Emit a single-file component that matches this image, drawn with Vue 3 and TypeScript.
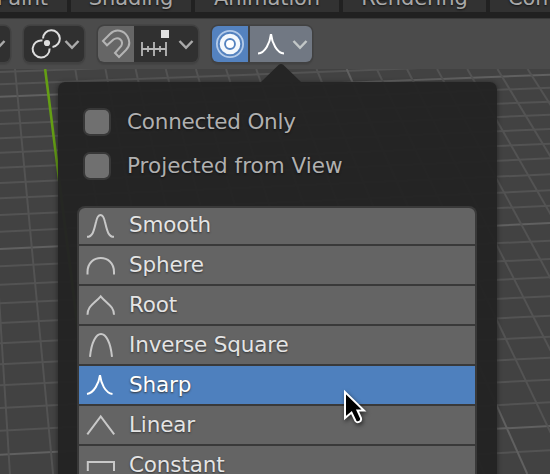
<script setup lang="ts">
interface Falloff {
  name: string
  path: string
}

const falloffs: Falloff[] = [
  { name: 'Smooth', path: 'M1 26.8 C7 26.8 8 20 10 12 C12 2.5 17 2.5 19 12 C21 20 22 26.8 28 26.8' },
  { name: 'Sphere', path: 'M1.5 24.5 V22 C1.5 3.3 28 3.3 28 22 V24.5' },
  { name: 'Root', path: 'M1.5 24.8 C1.5 16 8 14 14.7 6.3 C21 14 28 16 28 24.8' },
  { name: 'Inverse Square', path: 'M4 26.8 C7 -3.5 23 -3.5 26 26.8' },
  { name: 'Sharp', path: 'M1 24 C8 23 13 13 14 5 C15 13 19 23 26.5 24' },
  { name: 'Linear', path: 'M1.3 24.4 L14.7 6.5 L28.2 24.4' },
  { name: 'Constant', path: 'M1.8 21 V12 H28 V21' },
]
const active = 'Sharp'
const options = [
  { name: 'Connected Only', key: 'connected' },
  { name: 'Projected from View', key: 'projected' },
]
const tabs = [
  { name: 'Paint', key: 'paint' },
  { name: 'Shading', key: 'shading' },
  { name: 'Animation', key: 'animation' },
  { name: 'Rendering', key: 'rendering' },
  { name: 'Compositing', key: 'compositing' },
]

// Floor grid in perspective: heights at both sides of the viewport, in thirds of a pixel.
const leftEdge = [36, 73, 110, 152, 192, 235, 278, 323, 369, 415, 465, 515, 567, 619, 674, 730, 789, 850, 913, 976, 1044, 1112, 1184, 1258]
const rightEdge = [-25, 9, 44, 83, 125, 164, 207, 251, 295, 343, 391, 437, 489, 542, 597, 652, 709, 767, 830, 893, 959, 1027, 1098, 1171]
const rows = leftEdge.map((l, i) => ({ y1: l / 3 - 9, y2: rightEdge[i] / 3 - 9, major: i % 10 === 2 }))
const columns = Array.from({ length: 20 }, (_, i) => {
  const k = i - 1
  const x = 15 + 30.15 * k
  return { x1: x, x2: x + 405 * (0.094 + 0.032 * k), major: k === 11, axis: k === 1 }
})
</script>

<template>
  <div class="editor">
    <nav class="tabs">
      <div v-for="t in tabs" :key="t.key" class="tab" :class="t.key"><span>{{ t.name }}</span></div>
    </nav>
    <header class="header">
      <div class="button first">
        <svg class="chev" viewBox="0 0 16 12"><path d="M1.5 2 L8 8.8 L14.5 2" /></svg>
      </div>
      <div class="button pivot">
        <svg width="30" height="30" viewBox="0 0 30 30" class="pivot-icon">
          <path d="M12 9.5 A8.4 8.4 0 1 1 21.5 18" />
          <path d="M11.5 11.6 A8.5 8.5 0 1 0 18.6 19.5" />
          <circle cx="16" cy="14" r="3.1" />
        </svg>
        <svg class="chev" viewBox="0 0 16 12"><path d="M1.5 2 L8 8.8 L14.5 2" /></svg>
      </div>
      <div class="button snap">
        <div class="toggle">
          <svg width="30" height="30" viewBox="0 0 30 30" class="magnet">
            <path d="M2 12 L9 5 C15 -1 23 1.5 26.5 7.5 C29.5 13 28 18 25 21 L18 28 L14 24 L20.2 17 C23 11.5 17.5 7 12.5 10.5 L6 16.3 Z" />
          </svg>
        </div>
        <div class="increment">
          <svg width="30" height="30" viewBox="0 0 30 30">
            <path d="M1 13 V27 M13 13 V27 M25 13 V27 M1 20 H25 M7 17 V23 M19 17 V23" />
            <rect x="20" y="1" width="8" height="8" />
          </svg>
          <svg class="chev" viewBox="0 0 16 12"><path d="M1.5 2 L8 8.8 L14.5 2" /></svg>
        </div>
      </div>
      <div class="button proportional">
        <div class="toggle">
          <svg width="30" height="30" viewBox="0 0 30 30">
            <circle class="halo" cx="15" cy="15" r="13.1" />
            <circle class="ring" cx="15" cy="15" r="8.1" />
            <circle class="dot" cx="15" cy="15" r="4" />
          </svg>
        </div>
        <div class="falloff">
          <svg width="30" height="30" viewBox="0 0 30 30"><path d="M2 24.5 C9 24 14 14 15 5 C16 14 21 24 28 24.5" /></svg>
          <svg class="chev" viewBox="0 0 16 12"><path d="M1.5 2 L8 8.8 L14.5 2" /></svg>
        </div>
      </div>
    </header>
    <main class="viewport">
      <svg class="grid" width="550" height="405" viewBox="0 0 550 405">
        <line v-for="(r, i) in rows" :key="'r' + i" x1="0" :y1="r.y1" x2="550" :y2="r.y2" :class="{ major: r.major }" />
        <line v-for="(c, i) in columns" :key="'c' + i" :x1="c.x1" y1="0" :x2="c.x2" y2="405" :class="{ major: c.major, axis: c.axis }" />
      </svg>
    </main>
    <section class="popover">
      <svg class="arrow" width="40" height="18" viewBox="0 0 40 18"><path d="M0 18 L17.5 1 Q20 -1 22.5 1 L40 18 Z" /></svg>
      <div class="options">
        <div v-for="o in options" :key="o.key" class="option" :class="o.key"><i class="box"></i><span>{{ o.name }}</span></div>
      </div>
      <ul class="list">
        <li v-for="f in falloffs" :key="f.name" :class="{ active: f.name === active }">
          <svg width="30" height="30" viewBox="0 0 30 30"><path :d="f.path" /></svg>
          <span>{{ f.name }}</span>
        </li>
      </ul>
    </section>
    <svg class="cursor" width="24" height="38" viewBox="0 0 24 38">
      <path d="M2 3 V29 L8.5 23.5 L12.5 32 Q14.5 34.5 17.5 32 Q18.5 30.5 18 29 L14.5 21.5 H21 Z" />
    </svg>
  </div>
</template>

<style>
body { background: #424242; overflow: hidden; }
</style>
<style scoped>
.editor { position: relative; width: 550px; height: 474px; overflow: hidden; display: flex; flex-direction: column; font-family: "DejaVu Sans", sans-serif; font-size: 21.5px; color: #b0b0b0; }
svg { display: block; flex: none; fill: none; stroke-linecap: butt; }
.tabs { height: 12px; flex: none; display: flex; gap: 4px; background: #212121; border-bottom: 6px solid #212121; overflow: hidden; }
.tab { height: 12px; background: #323232; flex: none; display: flex; justify-content: center; align-items: flex-end; font-size: 21px; letter-spacing: -.1px; color: #a8a8a8; text-shadow: 0 1px 2px #111; }
.tab span { line-height: 26px; margin-bottom: 1px; white-space: nowrap; }
.paint { width: 67px; justify-content: flex-end; padding-right: 19px; box-sizing: border-box; }
.shading { width: 120px; }
.animation { width: 144px; }
.rendering { width: 143px; }
.compositing { width: 80px; justify-content: flex-start; padding-left: 18px; }
.header { height: 51px; flex: none; box-sizing: border-box; border-top: 1px solid #3a3a3a; background: #4b4b4b; display: flex; gap: 14px; padding-top: 7px; }
.button { height: 36px; border-radius: 6px; overflow: hidden; background: #303030; box-shadow: 0 0 0 1.5px #414141, 0 2px 1px 1px #454545; display: flex; align-items: center; flex: none; box-sizing: border-box; }
.chev { width: 16px; height: 12px; stroke: #aaa; stroke-width: 2.5; margin-top: 2px; }
.first { width: 10px; justify-content: flex-end; padding-right: 4px; border-radius: 0 6px 6px 0; }
.pivot { width: 60px; padding-left: 7px; gap: 3px; }
.pivot-icon { stroke: #ddd; stroke-width: 2; }
.pivot-icon circle { fill: #ddd; stroke: none; }
.snap { width: 100px; }
.toggle { width: 36px; height: 36px; flex: none; display: flex; align-items: center; justify-content: center; background: #666; }
.magnet { stroke: #b4b4b4; stroke-width: 2; }
.increment { display: flex; align-items: center; padding-left: 7px; gap: 7px; }
.increment svg:first-child { stroke: #b8b8b8; stroke-width: 1.8; }
.increment rect { fill: #e0e0e0; stroke: none; }
.proportional { width: 100px; gap: 2px; background: #414141; }
.proportional .toggle { background: #5482bf; }
.halo { stroke: #b3cae8; stroke-width: 1.8; }
.ring { stroke: #f4f8fc; stroke-width: 4.4; }
.dot { fill: #fff; }
.falloff { flex: 1; height: 36px; background: #717883; display: flex; align-items: center; padding-left: 6px; gap: 6px; }
.falloff svg:first-child { stroke: #fff; stroke-width: 2.1; }
.falloff .chev { stroke: #c2c7c7; }
.viewport { flex: 1; background: #424242; }
.grid line { stroke: #535353; stroke-width: 2; }
.grid line.major { stroke: #606060; stroke-width: 2; }
.grid line.axis { stroke: #649e14; stroke-width: 2.6; }
.popover { position: absolute; left: 58px; top: 82px; width: 438.5px; height: 400px; box-sizing: border-box; padding: 20px 21.5px 0 21px; border-radius: 7px 7px 0 0; background: rgba(36, 36, 36, .975); box-shadow: 0 1px 4px 1px rgba(20, 20, 20, .45); }
.arrow { position: absolute; left: 203px; top: -18px; fill: #252525; }
.options { height: 106px; padding: 0 6px; display: flex; flex-direction: column; }
.option { height: 40px; padding-bottom: 4px; display: flex; align-items: center; gap: 18px; line-height: 40px; text-shadow: 0 1px 2px #111; white-space: nowrap; }
.connected { letter-spacing: -.22px; }
.projected { letter-spacing: .03px; }
.box { width: 24px; height: 24px; border-radius: 5px; background: #707070; box-shadow: 0 0 0 2px #383838; flex: none; }
.list { list-style: none; margin: 0; padding: 0; display: flex; flex-direction: column; gap: 2px; width: 396px; background: #393939; border-radius: 6px 6px 0 0; box-shadow: 0 0 0 2px #393939; overflow: hidden; }
.list li { height: 38px; flex: none; background: #646464; display: flex; align-items: center; gap: 13px; padding-left: 7px; box-sizing: border-box; color: #e4e4e4; letter-spacing: -.15px; text-shadow: 0 1px 2px #333; }
.list li:first-child { height: 36px; padding-bottom: 2px; }
.list svg { stroke: #c8c8c8; stroke-width: 2; }
.list span { line-height: 36px; white-space: nowrap; }
.list li.active { background: #4e80be; color: #fff; }
.list li.active svg { stroke: #fff; }
.cursor { position: absolute; left: 343px; top: 389px; fill: #000; stroke: #fff; stroke-width: 2; filter: drop-shadow(1px 2px 2px rgba(0, 0, 0, .6)); }
</style>
